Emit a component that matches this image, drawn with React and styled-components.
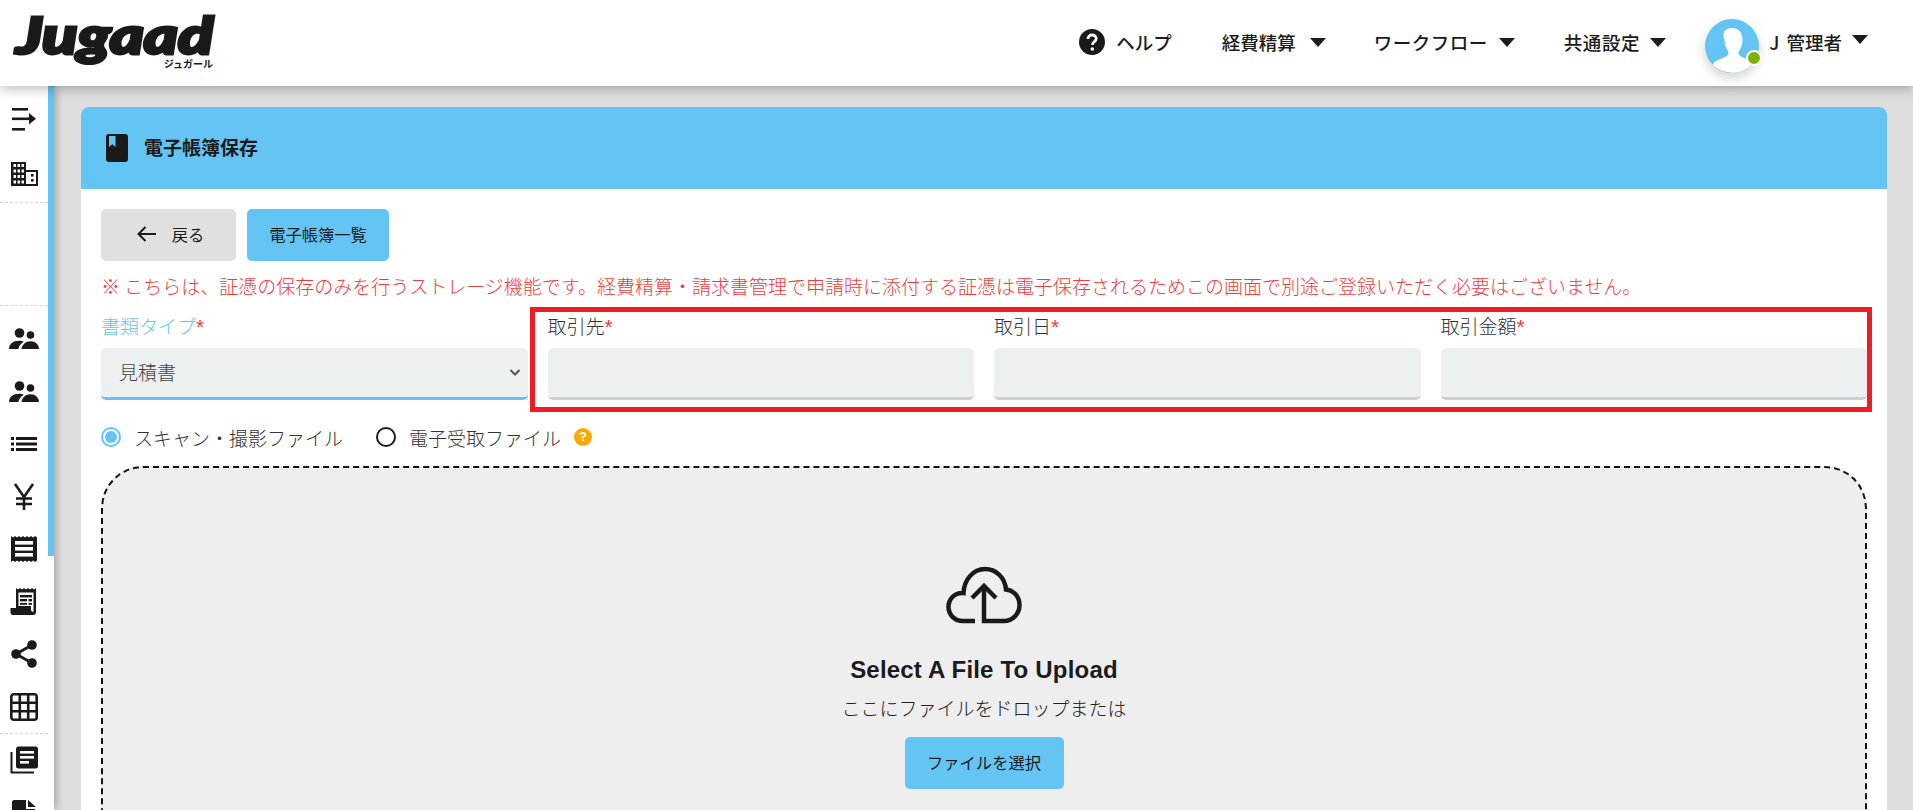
import React from "react";
import styled, { createGlobalStyle } from "styled-components";

const FONT = `"Noto Sans CJK JP", "Noto Sans", sans-serif`;
const BLUE = "#64c4f4";

const GlobalStyle = createGlobalStyle`
  html, body {
    margin: 0;
    height: 100%;
    overflow: hidden;
    background: #dedede;
    font-family: ${FONT};
    color: #222;
  }
`;

const Page = styled.div`
  width: 1913px;
  height: 810px;
  display: flex;
  flex-direction: column;
  overflow: hidden;
`;

const Header = styled.header`
  height: 86px;
  flex: none;
  background: #fff;
  display: flex;
  align-items: center;
  position: relative;
  z-index: 3;
  box-shadow: 0 2px 12px rgba(0, 0, 0, 0.3);
`;

const Logo = styled.div`
  margin-left: 16px;
  width: 206px;
  display: flex;
  flex-direction: column;
  align-items: flex-end;
  margin-top: -6px;
`;

const LogoWord = styled.div`
  font-family: "Lato", "Liberation Sans", sans-serif;
  font-weight: 900;
  font-style: italic;
  font-size: 52px;
  line-height: 46px;
  color: #1a1a1a;
  -webkit-text-stroke: 3px #1a1a1a;
  width: 204px;
  white-space: nowrap;
  transform: scaleX(1.25);
  transform-origin: left center;
  align-self: flex-start;
`;

const LogoSub = styled.div`
  font-size: 10px;
  line-height: 13px;
  font-weight: 700;
  color: #1a1a1a;
  margin-right: 9px;
`;

const Nav = styled.nav`
  margin-left: auto;
  display: flex;
  align-items: center;
  height: 100%;
`;

const NavItem = styled.div`
  display: flex;
  align-items: center;
  font-size: 18.5px;
  font-weight: 500;
  word-spacing: 3px;
  letter-spacing: ${(p) => p.$ls || 0}px;
  color: #1c1c1c;
  white-space: nowrap;
  margin: 0 ${(p) => p.$gap}px 3px 0;
`;

const HelpIcon = styled.svg`
  width: 26px;
  height: 26px;
  margin-right: 11px;
`;

const Caret = styled.span`
  width: 0;
  height: 0;
  margin-left: ${(p) => p.$gap || 13}px;
  border-left: 8px solid transparent;
  border-right: 8px solid transparent;
  border-top: 9px solid #1c1c1c;
  margin-top: ${(p) => p.$top || 2}px;
`;

const Avatar = styled.div`
  width: 54px;
  height: 54px;
  border-radius: 50%;
  background: ${BLUE};
  position: relative;
  margin: 5px 10px 0 0;
  box-shadow: 0 5px 12px rgba(0, 0, 0, 0.18);
  svg {
    display: block;
    width: 54px;
    height: 54px;
    border-radius: 50%;
  }
`;

const OnlineDot = styled.span`
  position: absolute;
  right: -3px;
  bottom: 7px;
  width: 12px;
  height: 12px;
  border-radius: 50%;
  background: #7cb305;
  border: 2px solid #fff;
`;

const Body = styled.div`
  flex: 1;
  display: flex;
  min-height: 0;
`;

const Sidebar = styled.aside`
  width: 54px;
  flex: none;
  background: #fff;
  position: relative;
  z-index: 2;
  padding-top: 6px;
  box-sizing: border-box;
  box-shadow: 2px 0 8px rgba(0, 0, 0, 0.28);
  overflow: hidden;
`;

const ScrollThumb = styled.span`
  position: absolute;
  right: 0;
  top: 0;
  width: 6px;
  height: 470px;
  background: ${BLUE};
`;

const SideItem = styled.div`
  width: 48px;
  height: ${(p) => p.$h || 52.5}px;
  display: flex;
  align-items: center;
  justify-content: center;
  svg {
    display: block;
  }
`;

const SideDivider = styled.div`
  width: 48px;
  border-top: 1px dashed #d4d4d4;
  margin-top: ${(p) => p.$top || 0}px;
  margin-bottom: ${(p) => p.$bottom || 0}px;
`;

const Main = styled.main`
  flex: 1;
  min-width: 0;
  padding: 21px 26px 0 27px;
`;

const Card = styled.section`
  background: #fff;
  border-radius: 8px 8px 0 0;
  height: 800px;
  overflow: hidden;
`;

const CardHeader = styled.div`
  height: 82px;
  box-sizing: border-box;
  background: ${BLUE};
  display: flex;
  align-items: center;
  padding: 0 0 3px 25px;
  font-size: 19px;
  font-weight: 700;
  color: #1b1b1b;
  svg {
    margin: 3px 16px 0 0;
  }
`;

const CardBody = styled.div`
  padding: 20px;
`;

const ButtonRow = styled.div`
  display: flex;
  gap: 11px;
`;

const Button = styled.button`
  height: 52px;
  width: ${(p) => p.$w}px;
  margin-top: ${(p) => p.$top || 0}px;
  border: 0;
  border-radius: 5px;
  background: ${(p) => (p.$gray ? "#e0e0e0" : BLUE)};
  color: #1d1d1d;
  font-family: ${FONT};
  font-size: 16.3px;
  display: flex;
  align-items: center;
  justify-content: center;
  gap: 15px;
  padding: 0 0 3px ${(p) => (p.$gray ? 4 : 0)}px;
`;

const Note = styled.div`
  margin-top: 9px;
  height: 32px;
  line-height: 32px;
  font-size: 19px;
  font-weight: 300;
  color: #f23c3c;
  white-space: nowrap;
`;

const FormRow = styled.div`
  position: relative;
  display: grid;
  grid-template-columns: repeat(4, 1fr);
  column-gap: 20px;
  margin-top: 6px;
`;

const Highlight = styled.div`
  position: absolute;
  left: 429px;
  right: -5px;
  top: -1px;
  height: 105px;
  border: 5px solid #ee1c25;
  box-sizing: border-box;
  pointer-events: none;
`;

const Field = styled.div`
  display: flex;
  flex-direction: column;
`;

const Label = styled.label`
  height: 40px;
  line-height: 36px;
  font-size: 19px;
  font-weight: 300;
  color: ${(p) => (p.$active ? BLUE : "#333")};
  white-space: nowrap;
`;

const Required = styled.span`
  font-family: "Liberation Sans", sans-serif;
  font-size: 21px;
  color: #f33;
`;

const Input = styled.div`
  height: 52px;
  box-sizing: border-box;
  background: #edf0f1;
  border-radius: 5px;
  border-bottom: 3px solid ${(p) => (p.$active ? BLUE : "#cfcfcf")};
  display: flex;
  align-items: center;
  justify-content: space-between;
  padding: 0 6px 2px 18px;
  font-size: 19px;
  font-weight: 300;
  color: #444;
`;

const RadioRow = styled.div`
  display: flex;
  align-items: center;
  margin-top: 18px;
  height: 38px;
  font-size: 19px;
  font-weight: 300;
  color: #333;
`;

const RadioMark = styled.span`
  width: 20px;
  height: 20px;
  box-sizing: border-box;
  border-radius: 50%;
  border: 2.5px solid ${(p) => (p.$on ? BLUE : "#1c1c1c")};
  padding: 2px;
  margin-right: 13px;
  &::after {
    content: "";
    display: ${(p) => (p.$on ? "block" : "none")};
    width: 100%;
    height: 100%;
    border-radius: 50%;
    background: ${BLUE};
  }
`;

const RadioText = styled.span`
  margin-right: ${(p) => p.$gap}px;
  white-space: nowrap;
`;

const HintBadge = styled.span`
  width: 18px;
  height: 18px;
  border-radius: 50%;
  background: #ffa800;
  color: #fff;
  font-family: "Liberation Sans", sans-serif;
  font-size: 13px;
  font-weight: 700;
  line-height: 18px;
  text-align: center;
`;

const DropZone = styled.div`
  margin-top: 10px;
  height: 400px;
  background: #eee;
  border: 2px dashed #111;
  border-radius: 42px;
  display: flex;
  flex-direction: column;
  align-items: center;
  padding-top: 98px;
  box-sizing: border-box;
`;

const DropTitle = styled.div`
  margin-top: 28px;
  font-family: "Liberation Sans", Arial, sans-serif;
  font-weight: 700;
  font-size: 24px;
  line-height: 36px;
  letter-spacing: 0.2px;
  color: #1b1b1b;
`;

const DropText = styled.div`
  margin-top: 4px;
  font-size: 19px;
  font-weight: 300;
  line-height: 32px;
  color: #222;
`;

const sideIcons = {
  collapse: (
    <svg width="26" height="26" viewBox="0 0 26 26" fill="#1a1a1a">
      <rect x="1" y="2" width="16" height="2.6" />
      <rect x="1" y="11.5" width="20" height="2.6" />
      <path d="M18 7l7 5.800-7 5.800z" />
      <rect x="1" y="22" width="13" height="2.6" />
    </svg>
  ),
  building: (
    <svg width="27" height="24" viewBox="0 0 27 24">
      <path fill="#1a1a1a" d="M0 0h15v8h12v16H0z" />
      <g fill="#fff">
        <rect x="2.500" y="2" width="2.500" height="3" />
        <rect x="6.500" y="2" width="2.500" height="3" />
        <rect x="10.500" y="2" width="2.500" height="3" />
        <rect x="2.500" y="7.500" width="2.500" height="3" />
        <rect x="6.500" y="7.500" width="2.500" height="3" />
        <rect x="10.500" y="7.500" width="2.500" height="3" />
        <rect x="2.500" y="13" width="2.500" height="3" />
        <rect x="6.500" y="13" width="2.500" height="3" />
        <rect x="10.500" y="13" width="2.500" height="3" />
        <rect x="2.500" y="18.500" width="2.500" height="3" />
        <rect x="6.500" y="18.500" width="2.500" height="3" />
        <rect x="10.500" y="18.500" width="2.500" height="3" />
        <rect x="15" y="10" width="10" height="12" />
      </g>
      <g fill="#1a1a1a">
        <rect x="20" y="12" width="2.600" height="2.600" />
        <rect x="20" y="17" width="2.600" height="2.600" />
      </g>
    </svg>
  ),
  people: (
    <svg width="30" height="22" viewBox="0 0 30 22" fill="#1a1a1a">
      <circle cx="10.500" cy="5" r="4.800" />
      <circle cx="21.500" cy="7" r="3.800" />
      <path d="M0 21c0-4.800 4-8.300 10-8.300 2 0 3.500.4 4.800 1-3 1.800-5 4.300-5.500 7.300z" />
      <path d="M12.500 21c.5-4.300 4-7.800 9-7.800s8.300 3.500 8.500 7.800z" />
    </svg>
  ),
  list: (
    <svg width="28" height="16" viewBox="0 0 28 16" fill="#1a1a1a">
      <rect x="1" y="1" width="3" height="3" />
      <rect x="1" y="6.500" width="3" height="3" />
      <rect x="1" y="12" width="3" height="3" />
      <rect x="6" y="1" width="21" height="3" />
      <rect x="6" y="6.500" width="21" height="3" />
      <rect x="6" y="12" width="21" height="3" />
    </svg>
  ),
  yen: (
    <svg width="22" height="28" viewBox="0 0 22 28" fill="none" stroke="#1a1a1a" strokeWidth="2.600">
      <path d="M2 1l9 13 9-13M11 14v13M3 15.500h16M3 21h16" />
    </svg>
  ),
  receipt: (
    <svg width="28" height="28" viewBox="0 0 28 28">
      <path
        fill="#1a1a1a"
        d="M1 1l2 1.500L5 1l2 1.500L9 1l2 1.500L13 1l2 1.500L17 1l2 1.500L21 1l2 1.500L25 1l2 1.500v23L25 27l-2-1.500L21 27l-2-1.500L17 27l-2-1.500L13 27l-2-1.500L9 27l-2-1.500L5 27l-2-1.500L1 27z"
      />
      <g fill="#fff">
        <rect x="5" y="6" width="18" height="3.600" />
        <rect x="5" y="12" width="18" height="3.600" />
        <rect x="5" y="18" width="18" height="3.600" />
      </g>
    </svg>
  ),
  bill: (
    <svg width="28" height="30" viewBox="0 0 28 30">
      <path fill="#1a1a1a" d="M6 1l2 1.500L10 1l2 1.500L14 1l2 1.500L18 1l2 1.500L22 1l2 1.500L26 1v24c0 2-1 3-3 3H3c-1.500 0-2.500-1-2.500-2.500V21H6z" />
      <path fill="#fff" d="M8.500 5.500h15V25c-1.500 0-2.500-1-2.500-2.500V19H8.500z" />
      <g fill="#1a1a1a">
        <rect x="10" y="8" width="12" height="2.400" />
        <rect x="10" y="12" width="7" height="2.400" />
        <rect x="18.500" y="12" width="3.500" height="2.400" />
        <rect x="10" y="16" width="7" height="1.800" />
        <rect x="18.500" y="16" width="3.500" height="1.800" />
      </g>
    </svg>
  ),
  share: (
    <svg width="28" height="30" viewBox="0 0 28 30" fill="#1a1a1a">
      <circle cx="22" cy="6" r="4.800" />
      <circle cx="6" cy="15" r="4.800" />
      <circle cx="22" cy="24" r="4.800" />
      <path d="M6 15L22 6M6 15l16 9" stroke="#1a1a1a" strokeWidth="2.800" />
    </svg>
  ),
  grid: (
    <svg width="28" height="28" viewBox="0 0 28 28" fill="none" stroke="#1a1a1a" strokeWidth="2.600">
      <rect x="1.300" y="1.300" width="25.400" height="25.400" rx="2.500" />
      <path d="M9.800 1.300v25.400M18.200 1.300v25.400M1.300 9.800h25.400M1.300 18.200h25.400" />
    </svg>
  ),
  book: (
    <svg width="28" height="28" viewBox="0 0 28 28">
      <path fill="none" stroke="#1a1a1a" strokeWidth="2" d="M1.500 6v20.500H24" />
      <rect x="6" y="0.500" width="22" height="22" rx="2.500" fill="#1a1a1a" />
      <g fill="#fff">
        <rect x="10" y="5" width="14" height="2.600" />
        <rect x="10" y="10" width="14" height="2.600" />
        <rect x="10" y="15" width="9" height="2.600" />
      </g>
    </svg>
  ),
  doc: (
    <svg width="26" height="26" viewBox="0 0 26 26" fill="#1a1a1a">
      <path d="M1 2c0-1 1-2 2-2h12v9h9l1 17H1z" />
      <path d="M17 0l8 7h-8z" />
    </svg>
  ),
};

const App = () => {
  return (
    <Page>
      <GlobalStyle />
      <Header>
        <Logo>
          <LogoWord>Jugaad</LogoWord>
          <LogoSub>ジュガール</LogoSub>
        </Logo>
        <Nav>
          <NavItem $gap={50}>
            <HelpIcon viewBox="0 0 26 26">
              <circle cx="13" cy="13" r="13" fill="#1a1a1a" />
              <path
                d="M9 10c0-2.500 1.800-4 4.100-4s4.100 1.400 4.100 3.600c0 3-3.600 3.300-3.800 6.200"
                fill="none"
                stroke="#fff"
                strokeWidth="2.800"
              />
              <circle cx="13.300" cy="20" r="1.800" fill="#fff" />
            </HelpIcon>
            ヘルプ
          </NavItem>
          <NavItem $gap={48}>
            経費精算
            <Caret $gap={14} />
          </NavItem>
          <NavItem $gap={49} $ls={0.5}>
            ワークフロー
            <Caret $gap={11} />
          </NavItem>
          <NavItem $gap={39} $ls={0.6}>
            共通設定
            <Caret $gap={10} />
          </NavItem>
          <Avatar>
            <svg viewBox="0 0 54 54">
              <path
                fill="#fff"
                d="M27 9c7 0 10.500 5 10.500 11.500 0 5-1.500 9-3.500 11.500-1.500 2 0 4.500 3 6l9 4c1.500.8 2.500 2 3.500 4-5 5-12 8-19.500 8S12.500 51 7.500 46c1-2 2-3.200 3.500-4l9-4c3-1.500 4.500-4 3-6-2-2.500-3.500-6.500-3.500-11.500C16.500 14 20 9 27 9z"
              />
            </svg>
            <OnlineDot />
          </Avatar>
          <NavItem $gap={45}>
            J 管理者
            <Caret $gap={10} $top={-4} />
          </NavItem>
        </Nav>
      </Header>
      <Body>
        <Sidebar>
          <ScrollThumb />
          <SideItem $h={53}>{sideIcons.collapse}</SideItem>
          <SideItem $h={57}>{sideIcons.building}</SideItem>
          <SideDivider $bottom={102} />
          <SideDivider $bottom={7} />
          <SideItem>{sideIcons.people}</SideItem>
          <SideItem>{sideIcons.people}</SideItem>
          <SideItem>{sideIcons.list}</SideItem>
          <SideItem>{sideIcons.yen}</SideItem>
          <SideItem>{sideIcons.receipt}</SideItem>
          <SideItem>{sideIcons.bill}</SideItem>
          <SideItem>{sideIcons.share}</SideItem>
          <SideItem>{sideIcons.grid}</SideItem>
          <SideDivider />
          <SideItem>{sideIcons.book}</SideItem>
          <SideItem>{sideIcons.doc}</SideItem>
        </Sidebar>
        <Main>
          <Card>
            <CardHeader>
              <svg width="22" height="28" viewBox="0 0 22 28">
                <rect width="22" height="28" rx="3" fill="#1a1a1a" />
                <path d="M3 2h6.500v11l-3.250-2.800L3 13z" fill={BLUE} />
              </svg>
              電子帳簿保存
            </CardHeader>
            <CardBody>
              <ButtonRow>
                <Button $gray $w={135}>
                  <svg width="20" height="16" viewBox="0 0 20 16" fill="none" stroke="#1a1a1a" strokeWidth="2">
                    <path d="M19 8H2M8.500 1L1.500 8l7 7" />
                  </svg>
                  戻る
                </Button>
                <Button $w={142}>電子帳簿一覧</Button>
              </ButtonRow>
              <Note>
                ※ こちらは、証憑の保存のみを行うストレージ機能です。経費精算・請求書管理で申請時に添付する証憑は電子保存されるためこの画面で別途ご登録いただく必要はございません。
              </Note>
              <FormRow>
                <Highlight />
                <Field>
                  <Label $active>
                    書類タイプ<Required>*</Required>
                  </Label>
                  <Input $active>
                    見積書
                    <svg width="14" height="14" viewBox="0 0 14 14" fill="none" stroke="#555" strokeWidth="2">
                      <path d="M2.500 5l4.500 4.500L11.500 5" />
                    </svg>
                  </Input>
                </Field>
                <Field>
                  <Label>
                    取引先<Required>*</Required>
                  </Label>
                  <Input />
                </Field>
                <Field>
                  <Label>
                    取引日<Required>*</Required>
                  </Label>
                  <Input />
                </Field>
                <Field>
                  <Label>
                    取引金額<Required>*</Required>
                  </Label>
                  <Input />
                </Field>
              </FormRow>
              <RadioRow>
                <RadioMark $on />
                <RadioText $gap={33}>スキャン・撮影ファイル</RadioText>
                <RadioMark />
                <RadioText $gap={13}>電子受取ファイル</RadioText>
                <HintBadge>?</HintBadge>
              </RadioRow>
              <DropZone>
                <svg width="76" height="58" viewBox="0 0 76 58" fill="none" stroke="#1a1a1a" strokeWidth="4.500">
                  <path d="M29 55H17C8.500 55 2.500 48.500 2.500 41c0-8 6-14 13.500-14 .5 0 1 0 1.500.1C18 14 27 3 39 3c11 0 20 8.500 21 20.500 7.500.8 13.500 7 13.500 15.500 0 9-7 16-15.500 16H38V20" />
                  <path d="M26 32l12-12 12 12" />
                </svg>
                <DropTitle>Select A File To Upload</DropTitle>
                <DropText>ここにファイルをドロップまたは</DropText>
                <Button $w={159} $top={13}>
                  ファイルを選択
                </Button>
              </DropZone>
            </CardBody>
          </Card>
        </Main>
      </Body>
    </Page>
  );
};

export default App;
